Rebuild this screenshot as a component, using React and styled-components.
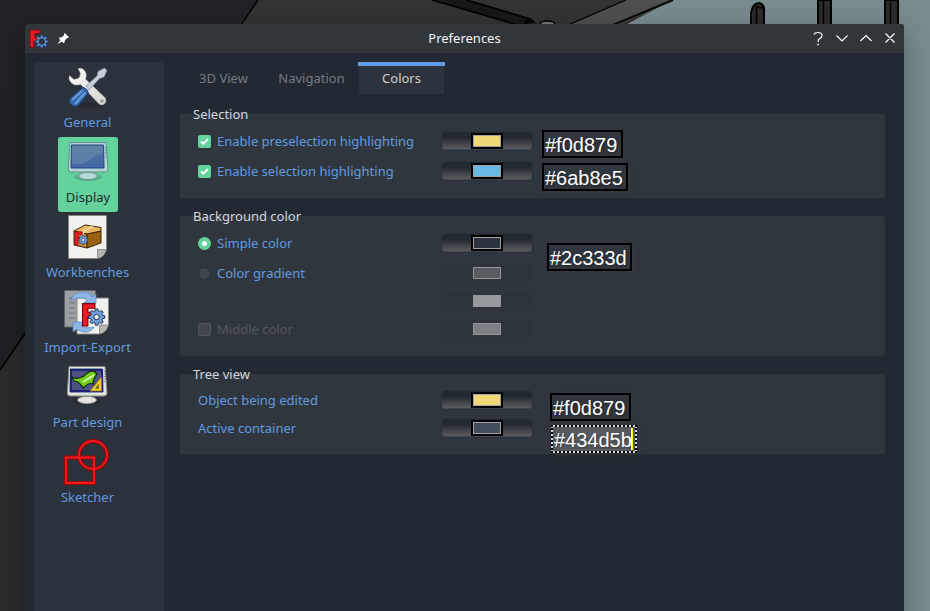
import React from 'react';
import styled, { createGlobalStyle, css } from 'styled-components';

const Global = createGlobalStyle`
  * { box-sizing: border-box; }
  body { margin: 0; overflow: hidden; background: #1f2022; font-family: "Noto Sans", sans-serif; font-size: 13px; }
`;

const Screen = styled.div`
  position: relative;
  width: 930px;
  height: 611px;
  overflow: hidden;
  padding: 24px 26px 0 25px;
`;

const SceneArt = styled.svg`
  position: absolute;
  inset: 0;
`;

const Dialog = styled.div`
  position: relative;
  display: flex;
  flex-direction: column;
  height: 620px;
  border-radius: 3px 3px 0 0;
  background: #232932;
  box-shadow: 0 8px 26px rgba(0, 0, 0, 0.3);
`;

const TitleBar = styled.header`
  display: grid;
  grid-template-columns: 1fr auto 1fr;
  align-items: center;
  height: 29px;
  border-radius: 3px 3px 0 0;
  background: #31363a;
  color: #f4f5f5;
`;

const TitleSide = styled.div`
  display: flex;
  align-items: center;
  justify-content: ${(p) => (p.$end ? 'flex-end' : 'flex-start')};
  height: 29px;
`;

const Title = styled.h1`
  margin: 0;
  font-size: 13px;
  font-weight: 400;
  line-height: 29px;
`;

const Body = styled.div`
  display: flex;
  gap: 16px;
  flex: 1;
  padding: 9px 19px 0 9px;
`;

const Sidebar = styled.nav`
  display: flex;
  flex-direction: column;
  width: 130px;
  border-radius: 3px;
  background: #2c323c;
`;

const NavItem = styled.div`
  display: flex;
  flex-direction: column;
  align-items: center;
  width: 60px;
  height: 75px;
  margin-left: 24px;
  padding-top: 2px;
  border-radius: 3px;
  color: ${(p) => (p.$active ? '#232932' : '#609be0')};
  background: ${(p) => (p.$active ? '#63d29c' : 'transparent')};
  line-height: 18px;
  white-space: nowrap;

  svg { flex: none; margin: 0 2px 1px 0; }
`;

const NavLabel = styled.span`
  margin-right: ${(p) => (p.$active ? 0 : 1)}px;
`;

const Content = styled.main`
  display: flex;
  flex-direction: column;
  flex: 1;
`;

const Tabs = styled.div`
  display: flex;
  height: 32px;
  margin-bottom: 20px;
`;

const Tab = styled.div`
  width: ${(p) => p.$width}px;
  margin-left: ${(p) => p.$offset || 0}px;
  padding-top: ${(p) => (p.$active ? 3 : 7)}px;
  text-align: center;
  line-height: 18px;
  color: ${(p) => (p.$active ? '#cfcfcc' : '#737a84')};
  ${(p) => p.$active && css`
    border-top: 4px solid #5f9ee6;
    background: linear-gradient(#2c333d, #2c333d) center / 85px 100% no-repeat;
  `}
`;

const Group = styled.section`
  height: ${(p) => p.$height}px;
  margin-bottom: 18px;
  padding-left: 18px;
  border-radius: 3px;
  background: #30363e;
`;

const Legend = styled.h2`
  height: 18px;
  margin: -9px 0 3px -5px;
  font-size: 13px;
  font-weight: 400;
  line-height: 18px;
  color: #d3d7dd;
`;

const Row = styled.div`
  display: grid;
  grid-template-columns: 244px 90px;
  align-items: center;
  height: ${(p) => p.$height}px;
`;

const Option = styled.div`
  display: flex;
  align-items: center;
  gap: 6px;
  line-height: 18px;
  color: ${(p) => (p.$disabled ? '#50555e' : '#609be0')};
`;

const Check = styled.span`
  display: grid;
  place-items: center;
  width: 13px;
  height: 13px;
  border-radius: 2px;
  border: ${(p) => (p.$on ? 'none' : '1px solid #52565e')};
  background: ${(p) => (p.$on ? '#63d29c' : '#42474f')};
`;

const Radio = styled.span`
  display: grid;
  place-items: center;
  width: 13px;
  height: 13px;
  border-radius: 50%;
  border: ${(p) => (p.$on ? 'none' : '1px solid #282e37')};
  background: ${(p) => (p.$on ? '#63d29c' : '#40464e')};

  &::after {
    content: '';
    width: 5px;
    height: 5px;
    border-radius: 50%;
    background: ${(p) => (p.$on ? '#fff' : 'transparent')};
  }
`;

const ColorButton = styled.div`
  display: grid;
  place-items: center;
  width: 90px;
  height: 18px;
  border-radius: 4px;
  background: ${(p) => (p.$disabled ? '#2e343c' : 'linear-gradient(#232932 30%, #5f5f60) border-box')};
  box-shadow: ${(p) => (p.$disabled ? 'none' : '0 0 0 0.5px #272d37, inset 0 -1px #3f4857')};
`;

const Swatch = styled.span`
  width: 28px;
  height: 12px;
  border: 1px solid ${(p) => (p.$disabled ? '#93969a' : '#a2a2a4')};
  background: ${(p) => p.$color};
  box-shadow: ${(p) => (p.$disabled ? 'none' : '0 0 0 2px #000')};
`;

const Callout = styled.div`
  position: absolute;
  left: ${(p) => p.$x}px;
  top: ${(p) => p.$y}px;
  width: ${(p) => p.$width}px;
  height: 28px;
  padding-left: 1px;
  border: 2px solid #000;
  font: 20px/26px "Liberation Sans", sans-serif;
  color: #fff;
  text-shadow: 1px 1px 2px rgba(0, 0, 0, 0.35);
  box-shadow: 2px 2px 4px rgba(70, 70, 70, 0.25);
  ${(p) => p.$editing && css`
    border: 2px dotted #000;
    background: linear-gradient(#555a61, #555a61) padding-box, #d8d8d8;
  `}
`;

const Caret = styled.span`
  position: absolute;
  right: 2px;
  top: 1px;
  width: 2px;
  height: 22px;
  background: linear-gradient(90deg, #fff 50%, #ffff00 50%);
`;

const Scene = () => (
  <SceneArt width="930" height="611" viewBox="0 0 930 611">
    <defs>
      <linearGradient id="wall" x1="0" y1="0" x2="0" y2="1">
        <stop offset="0" stopColor="#212225" />
        <stop offset="1" stopColor="#1e1f21" />
      </linearGradient>
    </defs>
    <rect width="930" height="611" fill="url(#wall)" />
    <path d="M258 0H700L560 90H185Z" fill="#333" />
    <path d="M258 0L240 26" stroke="#000" strokeWidth="1.6" />
    <path d="M432 0L518 26H540L531 19L468 0Z" fill="#171717" />
    <path d="M432 0L518 25M466 0L530 19L524 23L534 21" fill="none" stroke="#000" strokeWidth="1.8" />
    <path d="M626 0H676L616 26H568Z" fill="#4f4f4f" />
    <path d="M626 0L568 25" stroke="#000" strokeWidth="1.2" />
    <path d="M672 0H930V611H800V30H616Z" fill="#788b8f" />
    <path d="M673 0L613 25" stroke="#0a0a0a" strokeWidth="2.2" />
    <path d="M540 24Q541 21 547 21Q554 21 555 24" fill="#777" stroke="#000" strokeWidth="1.5" />
    <path d="M751 26V13Q753 3 759 3Q765 4 764 12V26Z" fill="#2b2b2b" stroke="#000" strokeWidth="2" />
    <path d="M756.5 26V7L763 8" fill="none" stroke="#000" strokeWidth="1.6" />
    <path d="M818 0H831V26H818ZM885 0H898V26H885Z" fill="#2b2b2b" stroke="#000" strokeWidth="2" />
    <path d="M823.5 0V26M890.5 0V26" stroke="#000" strokeWidth="1.4" />
    <path d="M0 370L26 332V611H0Z" fill="#2b2b2b" />
    <path d="M0 370L26 332" stroke="#000" strokeWidth="1.5" />
  </SceneArt>
);

const gearPath = (cx, cy, outer, inner, teeth) => {
  const pts = [];
  const step = (Math.PI * 2) / teeth;
  for (let i = 0; i < teeth; i += 1) {
    [[-0.34, inner], [-0.2, outer], [0.2, outer], [0.34, inner]].forEach(([o, r]) => {
      const a = (i + o) * step;
      pts.push(`${(cx + r * Math.sin(a)).toFixed(2)} ${(cy - r * Math.cos(a)).toFixed(2)}`);
    });
  }
  return `M${pts.join('L')}Z`;
};

const Emblem = ({ x, y, scale }) => (
  <g transform={`translate(${x} ${y}) scale(${scale})`}>
    <path d="M.5 .5H11V4.500H5V8H9V12H5V19.500H.5Z" fill="#ed1c24" stroke="#7a0508" />
    <path d={gearPath(12.5, 12, 7, 5.2, 8)} fill="#6fa0dc" stroke="#14264c" strokeWidth=".8" />
    <circle cx="12.5" cy="12" r="2.3" fill="#e8edf4" stroke="#14264c" strokeWidth=".8" />
  </g>
);

const AppIcon = () => (
  <svg width="20" height="20" viewBox="0 0 20 20">
    <path d="M1 1H11V4.500H6V8.500H9V12H5V18.500H1Z" fill="#e31b20" stroke="#7d0c0e" />
    <path d={gearPath(12.8, 12.5, 6.6, 4.8, 8)} fill="#5e8fd2" stroke="#1c3566" strokeWidth=".7" />
    <circle cx="12.8" cy="12.5" r="2.9" fill="#30363a" stroke="#1c3566" strokeWidth=".7" />
  </svg>
);

const AppMark = styled.div`
  display: flex;
  margin: 0 8px 0 4px;
`;

const PinIcon = () => (
  <svg width="12" height="12" viewBox="0 0 13 13" fill="#fff">
    <path d="M8.5 0L13 4.500L12 5.500L11 5.300L8.600 7.800L8.300 10L7.200 11L2 6L3 4.800L5.200 4.600L7.700 2.100L7.500 1Z" />
    <path d="M4 7.300L.3 12.500L5.600 9" />
  </svg>
);

const WindowControls = () => (
  <svg width="96" height="29" viewBox="0 0 96 29" fill="none" stroke="#fcfcfc" strokeWidth="1.2">
    <path d="M6 10.500Q6.500 8.500 10 8.500Q14 8.500 14 11.500Q14 13.500 11.800 14.500Q10 15.500 10 18" />
    <path d="M9.300 20.500H10.800" strokeWidth="1.5" />
    <path d="M28.500 11.500L34 17L39.500 11.500M52.500 17L58 11.500L63.500 17M77.500 9.500L86.500 18.500M86.500 9.500L77.500 18.500" />
  </svg>
);

const Tick = () => (
  <svg width="9" height="9" viewBox="0 0 9 9">
    <path d="M1 4.600L3.300 6.700L8 2" fill="none" stroke="#fff" strokeWidth="2" />
  </svg>
);

const ToolsIcon = () => (
  <svg width="48" height="48" viewBox="0 0 48 48">
    <defs>
      <linearGradient id="steel" x1="0" y1="0" x2="1" y2="1">
        <stop offset="0" stopColor="#fff" /><stop offset="1" stopColor="#d2d2d0" />
      </linearGradient>
    </defs>
    <ellipse cx="24" cy="41" rx="17" ry="2.5" fill="#252a33" />
    <path d="M15 4.500Q19 3 22 7Q24.500 11 22.500 15L42.500 34Q44 38 41 40.500Q38 42 35.500 39.500L17.500 20.500Q11 22.500 7.500 18Q5 15 6.500 11.500L11 15.500L16 14L17.500 9.500Z" fill="url(#steel)" stroke="#8c8c8a" strokeWidth=".5" />
    <circle cx="39" cy="37" r="1.7" fill="#999" />
    <path d="M23 22L34 12L35 7.500L41.500 4L44 6.500L41 13L36.500 14.500L26 26Z" fill="#c5d0db" stroke="#7e8b9a" strokeWidth=".7" />
    <path d="M18.500 24.500Q20 22.500 22.500 24.500L24.500 26.500Q26 28.500 24 31L15.500 41Q12 44 8 40.500Q4.500 37 8 33.500Z" fill="#3468ad" stroke="#173e7b" strokeWidth="1" />
    <path d="M19 27L9.500 35.500M22 29L12.500 39.500" stroke="#6f9cd5" strokeWidth="2" strokeLinecap="round" />
  </svg>
);

const Monitor = ({ children, frame, edge, screen }) => (
  <>
    <ellipse cx="24" cy="39" rx="14" ry="4" fill="#000" opacity=".15" />
    <path d="M20 32H28L29 37H19Z" fill={frame} stroke={edge} />
    <ellipse cx="24" cy="38" rx="9.5" ry="3.7" fill={frame} stroke={edge} />
    <path d="M6 4.500H42L44 31Q44 34 41 34H7Q4 34 4.300 31Z" fill={frame} stroke={edge} />
    <path d="M7.500 7H39.500L40 30H7Z" fill={screen} stroke="#244487" />
    <path d="M41.500 9V20" stroke={edge} strokeWidth="1.2" strokeDasharray="1 1.5" />
    {children}
  </>
);

const DisplayIcon = () => (
  <svg width="48" height="48" viewBox="0 0 48 48">
    <defs>
      <linearGradient id="screen" x1="0" y1="0" x2="0" y2="1">
        <stop offset="0" stopColor="#4e7899" /><stop offset="1" stopColor="#4365a7" />
      </linearGradient>
    </defs>
    <g transform="translate(1 -1)">
      <Monitor frame="#b4d7d6" edge="#668f96" screen="url(#screen)">
        <path d="M8 8H39V15Q32 17 26 22T8 26Z" fill="#7699b5" opacity=".4" />
      </Monitor>
    </g>
  </svg>
);

const Page = ({ x, y, w, h }) => (
  <g transform={`translate(${x} ${y})`}>
    <path d={`M0 0H${w}V${h - 9}L${w - 9} ${h}H0Z`} fill="#f1f1ef" stroke="#86867f" />
    <path d={`M${w} ${h - 9}H${w - 9}V${h}Q${w - 2} ${h - 1} ${w} ${h - 9}Z`} fill="#b5b6b2" stroke="#777" strokeWidth=".7" />
  </g>
);

const WorkbenchesIcon = () => (
  <svg width="48" height="48" viewBox="0 0 48 48">
    <Page x={5.5} y={1.5} w={38} h={43} />
    <path d="M11 17L24 20V34L11 31Z" fill="#cf9337" stroke="#3d2405" />
    <path d="M24 20L38 17V29L24 34Z" fill="#9a6112" stroke="#3d2405" />
    <path d="M11 17L22 11L38 13.500V17L24 20Z" fill="#e9b760" stroke="#3d2405" />
    <path d="M17 18L28 12L31 12.500L21 19V23L18 22Z" fill="#f3d396" />
    <Emblem x={11.5} y={17.5} scale={0.7} />
  </svg>
);

const ImportIcon = () => (
  <svg width="48" height="48" viewBox="0 0 48 48">
    <path d="M1.500 1.500H32.500V38H1.500Z" fill="#9c9fa3" stroke="#5e6165" />
    <path d="M6 9H12M6 14H12M6 19H12M6 24H12M6 29H12" stroke="#84888d" strokeWidth="1.8" />
    <Page x={14} y={9} w={31.5} h={36} />
    <path d="M8 12Q10 3 20 3Q27 3 29 8L33 5V14H21L24 11Q18 6 8 12Z" fill="#8db6e5" stroke="#5387c2" strokeWidth=".7" />
    <path d="M31 38Q28 44 20 43Q15 42 14 40L10 43V33H21L18 37Q25 40 31 38Z" fill="#8db6e5" stroke="#5387c2" strokeWidth=".7" />
    <Emblem x={19} y={14} scale={1.17} />
  </svg>
);

const PartDesignIcon = () => (
  <svg width="48" height="48" viewBox="0 0 48 48">
    <g transform="translate(0 -2)">
      <Monitor frame="#e2e3df" edge="#858883" screen="#4c5283">
        <path d="M8 8H39V29H8Z" fill="none" stroke="#11176d" strokeWidth="1.5" />
        <path d="M9 15Q14 18 21 14Q25 9 31 9L34 12Q30 17 30 22Q26 20 20 26Q16 19 11 19Z" fill="#72ce1b" stroke="#0b2405" strokeWidth="1.2" />
        <path d="M20 20L31 13" stroke="#d8f6b5" strokeWidth="1.8" />
        <path d="M27 29L38.500 15V29ZM32.500 26.500H35.500V22Z" fill="#edca3e" fillRule="evenodd" stroke="#9a7712" strokeWidth=".7" />
      </Monitor>
    </g>
  </svg>
);

const SketcherIcon = () => (
  <svg width="48" height="48" viewBox="0 0 48 48" fill="none">
    <g stroke="#9d0508" strokeWidth="4">
      <path d="M3 18.500H31V44H3Z" /><circle cx="30" cy="16" r="14" />
    </g>
    <g stroke="#f11b1f" strokeWidth="1.8">
      <path d="M3 18.500H31V44H3Z" /><circle cx="30" cy="16" r="14" />
    </g>
  </svg>
);

const NAV = [
  ['General', ToolsIcon],
  ['Display', DisplayIcon],
  ['Workbenches', WorkbenchesIcon],
  ['Import-Export', ImportIcon],
  ['Part design', PartDesignIcon],
  ['Sketcher', SketcherIcon],
];

const ColorRow = ({ height, color, disabled, children }) => (
  <Row $height={height}>
    {children || <span />}
    <ColorButton $disabled={disabled}><Swatch $color={color} $disabled={disabled} /></ColorButton>
  </Row>
);

export default function App() {
  return (
    <Screen>
      <Global />
      <Scene />
      <Dialog>
        <TitleBar>
          <TitleSide><AppMark><AppIcon /></AppMark><PinIcon /></TitleSide>
          <Title>Preferences</Title>
          <TitleSide $end><WindowControls /></TitleSide>
        </TitleBar>
        <Body>
          <Sidebar>
            {NAV.map(([label, Icon]) => (
              <NavItem key={label} $active={label === 'Display'}>
                <Icon />
                <NavLabel $active={label === 'Display'}>{label}</NavLabel>
              </NavItem>
            ))}
          </Sidebar>
          <Content>
            <Tabs>
              <Tab $width={87}>3D View</Tab>
              <Tab $width={89}>Navigation</Tab>
              <Tab $width={87} $offset={2} $active>Colors</Tab>
            </Tabs>
            <Group $height={84}>
              <Legend>Selection</Legend>
              <ColorRow height={30} color="#f0d879">
                <Option><Check $on><Tick /></Check>Enable preselection highlighting</Option>
              </ColorRow>
              <ColorRow height={30} color="#6ab8e5">
                <Option><Check $on><Tick /></Check>Enable selection highlighting</Option>
              </ColorRow>
            </Group>
            <Group $height={140}>
              <Legend>Background color</Legend>
              <ColorRow height={30} color="#2c333d">
                <Option><Radio $on />Simple color</Option>
              </ColorRow>
              <ColorRow height={30} color="#595c61" disabled>
                <Option><Radio />Color gradient</Option>
              </ColorRow>
              <ColorRow height={26} color="#96999e" disabled />
              <ColorRow height={30} color="#7c7f83" disabled>
                <Option $disabled><Check />Middle color</Option>
              </ColorRow>
            </Group>
            <Group $height={80}>
              <Legend>Tree view</Legend>
              <ColorRow height={28} color="#f0d879"><Option>Object being edited</Option></ColorRow>
              <ColorRow height={28} color="#434d5b"><Option>Active container</Option></ColorRow>
            </Group>
          </Content>
        </Body>
      </Dialog>
      <Callout $x={542} $y={130} $width={81}>#f0d879</Callout>
      <Callout $x={542} $y={163} $width={86}>#6ab8e5</Callout>
      <Callout $x={547} $y={243} $width={85}>#2c333d</Callout>
      <Callout $x={550} $y={393} $width={81}>#f0d879</Callout>
      <Callout $x={551} $y={425} $width={86} $editing>#434d5b<Caret /></Callout>
    </Screen>
  );
}
